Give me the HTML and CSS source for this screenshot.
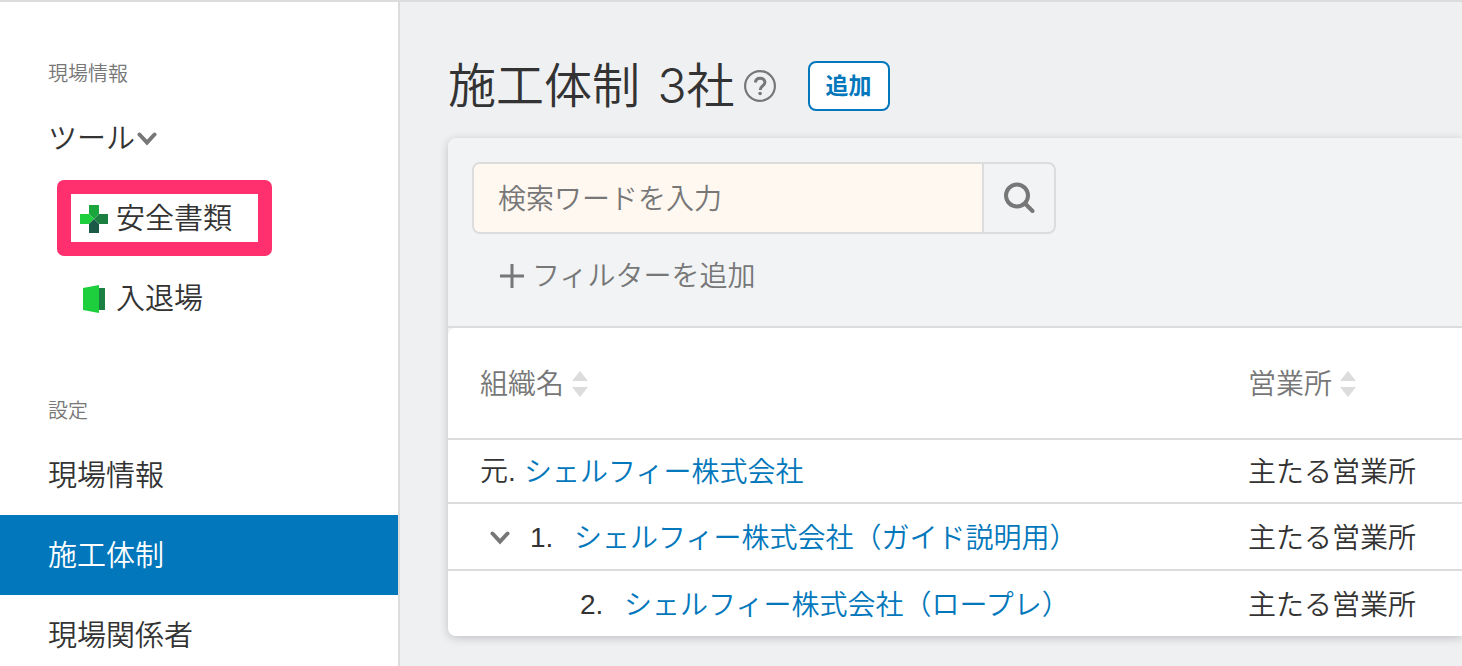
FILE: index.html
```html
<!DOCTYPE html>
<html lang="ja">
<head>
    <meta charset="UTF-8">
    <meta name="viewport" content="width=device-width, initial-scale=1.0">
    <title>施工体制</title>
    <link rel="stylesheet" href="styles.css">
</head>
<body>
    <div class="layout">
        <nav class="sidebar">
            <h2 class="nav-label">現場情報</h2>
            <button type="button" class="nav-item nav-toggle">
                ツール
                <svg class="chevron" viewBox="0 0 20 14" aria-hidden="true"><path d="M2.500 2.500 10 10.500 17.500 2.500"/></svg>
            </button>
            <a href="#" class="nav-item nav-sub highlighted">
                <svg class="nav-icon" viewBox="0 0 28 28" aria-hidden="true">
                    <path fill="#1aa63c" d="M9 0h10v9l-5 5-5-5z"/>
                    <path fill="#1dcf3c" d="M0 9h9l5 5-5 5H0z"/>
                    <path fill="#1c7f42" d="M28 9h-9l-5 5 5 5h9z"/>
                    <path fill="#1b5a47" d="M9 28h10v-9l-5-5-5 5z"/>
                </svg>
                安全書類
            </a>
            <a href="#" class="nav-item nav-sub">
                <svg class="nav-icon" viewBox="0 0 28 28" aria-hidden="true">
                    <path fill="#1dcf3c" d="M3 3 19 0v28L3 25z"/>
                    <path fill="#1c7f42" d="M19 3h6v22h-6z"/>
                </svg>
                入退場
            </a>

            <h2 class="nav-label nav-label-settings">設定</h2>
            <a href="#" class="nav-item">現場情報</a>
            <a href="#" class="nav-item active">施工体制</a>
            <a href="#" class="nav-item">現場関係者</a>
        </nav>

        <main class="content">
            <header class="page-header">
                <h1>施工体制 <span class="count">3社</span></h1>
                <button type="button" class="help-btn" aria-label="ヘルプ">
                    <svg viewBox="0 0 32 32" aria-hidden="true">
                        <circle cx="16" cy="16" r="14.900" fill="none" stroke="#777" stroke-width="2.200"/>
                        <path d="M11.300 12.500c.3-2.800 2.200-4.300 4.800-4.300 2.800 0 4.800 1.600 4.800 4 0 3.600-4.700 3.800-4.700 7.700" fill="none" stroke="#777" stroke-width="3"/>
                        <circle cx="16.100" cy="23.500" r="1.800" fill="#777"/>
                    </svg>
                </button>
                <button type="button" class="add-btn">追加</button>
            </header>

            <section class="card">
                <div class="card-header">
                    <form class="search">
                        <input type="text" name="keyword" placeholder="検索ワードを入力" aria-label="検索ワード">
                        <button type="submit" aria-label="検索">
                            <svg viewBox="0 0 32 32" aria-hidden="true">
                                <circle cx="14" cy="13.500" r="11"/>
                                <path d="M22 21.500 29.500 29"/>
                            </svg>
                        </button>
                    </form>
                    <button type="button" class="filter-btn">
                        <svg viewBox="0 0 24 24" aria-hidden="true"><path d="M12 0v24M0 12h24"/></svg>
                        フィルターを追加
                    </button>
                </div>

                <table class="org-table">
                    <thead>
                        <tr>
                            <th class="col-name" scope="col">
                                <button type="button" class="sort-btn">
                                    組織名
                                    <svg viewBox="0 0 16 26" aria-hidden="true"><path d="M8 0l8 10H0zM8 26l8-10H0z"/></svg>
                                </button>
                            </th>
                            <th scope="col">
                                <button type="button" class="sort-btn">
                                    営業所
                                    <svg viewBox="0 0 16 26" aria-hidden="true"><path d="M8 0l8 10H0zM8 26l8-10H0z"/></svg>
                                </button>
                            </th>
                        </tr>
                    </thead>
                    <tbody>
                        <tr class="row-root">
                            <td>
                                <div class="org">
                                    <span class="org-no">元.</span>
                                    <a href="#">シェルフィー株式会社</a>
                                </div>
                            </td>
                            <td>主たる営業所</td>
                        </tr>
                        <tr>
                            <td>
                                <div class="org">
                                    <button type="button" class="org-toggle" aria-label="折りたたむ">
                                        <svg class="chevron" viewBox="0 0 20 14" aria-hidden="true"><path d="M2.500 2.500 10 10.500 17.500 2.500"/></svg>
                                    </button>
                                    <span class="org-no">1.</span>
                                    <a href="#">シェルフィー株式会社（ガイド説明用）</a>
                                </div>
                            </td>
                            <td>主たる営業所</td>
                        </tr>
                        <tr>
                            <td>
                                <div class="org level-2">
                                    <span class="org-no">2.</span>
                                    <a href="#">シェルフィー株式会社（ロープレ）</a>
                                </div>
                            </td>
                            <td>主たる営業所</td>
                        </tr>
                    </tbody>
                </table>
            </section>
        </main>
    </div>
</body>
</html>
```
FILE: styles.css
```css
* {
    margin: 0;
    padding: 0;
    box-sizing: border-box;
}

body {
    background-color: #eff0f2;
    color: #333333;
    font-family: Inter, "Noto Sans CJK JP", sans-serif;
    font-size: 28px;
    font-weight: 350;
    line-height: 40px;
    overflow: hidden;
}

button,
input {
    font: inherit;
    color: inherit;
    background: none;
    border: none;
}

button {
    cursor: pointer;
}

a {
    color: #0277bb;
    text-decoration: none;
}

svg {
    display: block;
    flex-shrink: 0;
}

.layout {
    display: flex;
    min-height: 100vh;
    border-top: 2px solid #dcdcdc;
}

/* Sidebar */
.sidebar {
    flex: 0 0 400px;
    padding-top: 46px;
    background-color: #ffffff;
    border-right: 2px solid #dcdcdc;
}

.nav-label {
    height: 50px;
    padding-left: 48px;
    color: #777777;
    font-size: 20px;
    font-weight: inherit;
    line-height: 52px;
}

.nav-label-settings {
    margin-top: 47px;
}

.nav-item {
    display: flex;
    align-items: center;
    width: 100%;
    height: 80px;
    padding-top: 2px;
    padding-left: 48px;
    color: #333333;
    font-size: 29px;
}

.nav-item.active {
    background-color: #0277bb;
    color: #ffffff;
}

.nav-toggle {
    gap: 2px;
}

.nav-sub {
    gap: 8px;
    padding-left: 80px;
}

.nav-icon {
    width: 28px;
    height: 28px;
}

.nav-item.highlighted {
    width: fit-content;
    height: 76px;
    margin: 2px 0 2px 57px;
    padding: 2px 26px 0 9px;
    border: 14px solid #ff306d;
    border-radius: 7px;
}

.chevron {
    width: 20px;
    height: 14px;
    fill: none;
    stroke: #777777;
    stroke-width: 4;
    stroke-linecap: round;
}

/* Content */
.content {
    flex: 1;
    min-width: 0;
    padding: 48px 0 30px 48px;
}

.page-header {
    display: flex;
    align-items: center;
    height: 72px;
    margin-bottom: 16px;
}

.page-header h1 {
    font-size: 48px;
    font-weight: inherit;
    line-height: 72px;
}

.count {
    margin-left: 4px;
}

.help-btn {
    width: 32px;
    height: 32px;
    margin: 0 32px 0 9px;
}

.add-btn {
    width: 82px;
    height: 50px;
    background-color: #ffffff;
    border: 2px solid #0277bb;
    border-radius: 8px;
    color: #0277bb;
    font-size: 23px;
    font-weight: 700;
    line-height: 40px;
}

.card {
    background-color: #f1f3f5;
    border-radius: 8px 0 0 8px;
    box-shadow: 0 2px 10px rgba(0, 0, 0, 0.2);
}

.card-header {
    padding: 24px 24px 26px;
    border-bottom: 2px solid #dcdcdc;
}

.search {
    display: flex;
    width: 584px;
    max-width: 100%;
    height: 72px;
    border: 2px solid #dcdcdc;
    border-radius: 8px;
    overflow: hidden;
}

.search input {
    flex: 1;
    min-width: 0;
    padding: 2px 24px 0;
    background-color: #fff8f1;
    outline: none;
}

.search input::placeholder {
    color: #777777;
    opacity: 1;
}

.search button {
    width: 72px;
    padding-left: 19px;
    border-left: 2px solid #dcdcdc;
}

.search svg {
    width: 32px;
    height: 32px;
    fill: none;
    stroke: #777777;
    stroke-width: 4;
    stroke-linecap: round;
}

.filter-btn {
    display: flex;
    align-items: center;
    gap: 8px;
    height: 48px;
    margin: 18px 0 0 28px;
    color: #777777;
}

.filter-btn svg {
    width: 24px;
    height: 24px;
    stroke: #777777;
    stroke-width: 3;
}

/* Organization table */
.org-table {
    width: 100%;
    table-layout: fixed;
    border-spacing: 0;
    background-color: #ffffff;
    border-radius: 8px 0 0 8px;
}

.org-table th,
.org-table td {
    height: 67px;
    padding: 2px 0 0 32px;
    border-bottom: 2px solid #dcdcdc;
    text-align: left;
    white-space: nowrap;
}

.org-table th {
    height: 112px;
    font-weight: inherit;
}

.org-table .row-root td {
    height: 64px;
}

.org-table tbody tr:last-child td {
    height: 65px;
    border-bottom: none;
}

.org-table .col-name {
    width: 768px;
}

.sort-btn {
    display: flex;
    align-items: center;
    gap: 8px;
    color: #777777;
}

.sort-btn svg {
    width: 16px;
    height: 26px;
    fill: #dcdcdc;
}

.org {
    display: flex;
    align-items: center;
}

.org.level-2 {
    padding-left: 100px;
}

.org-toggle {
    width: 50px;
    padding-left: 10px;
}

.org-no {
    width: 44px;
    font-family: "Liberation Sans", "Noto Sans CJK JP", sans-serif;
}
```
